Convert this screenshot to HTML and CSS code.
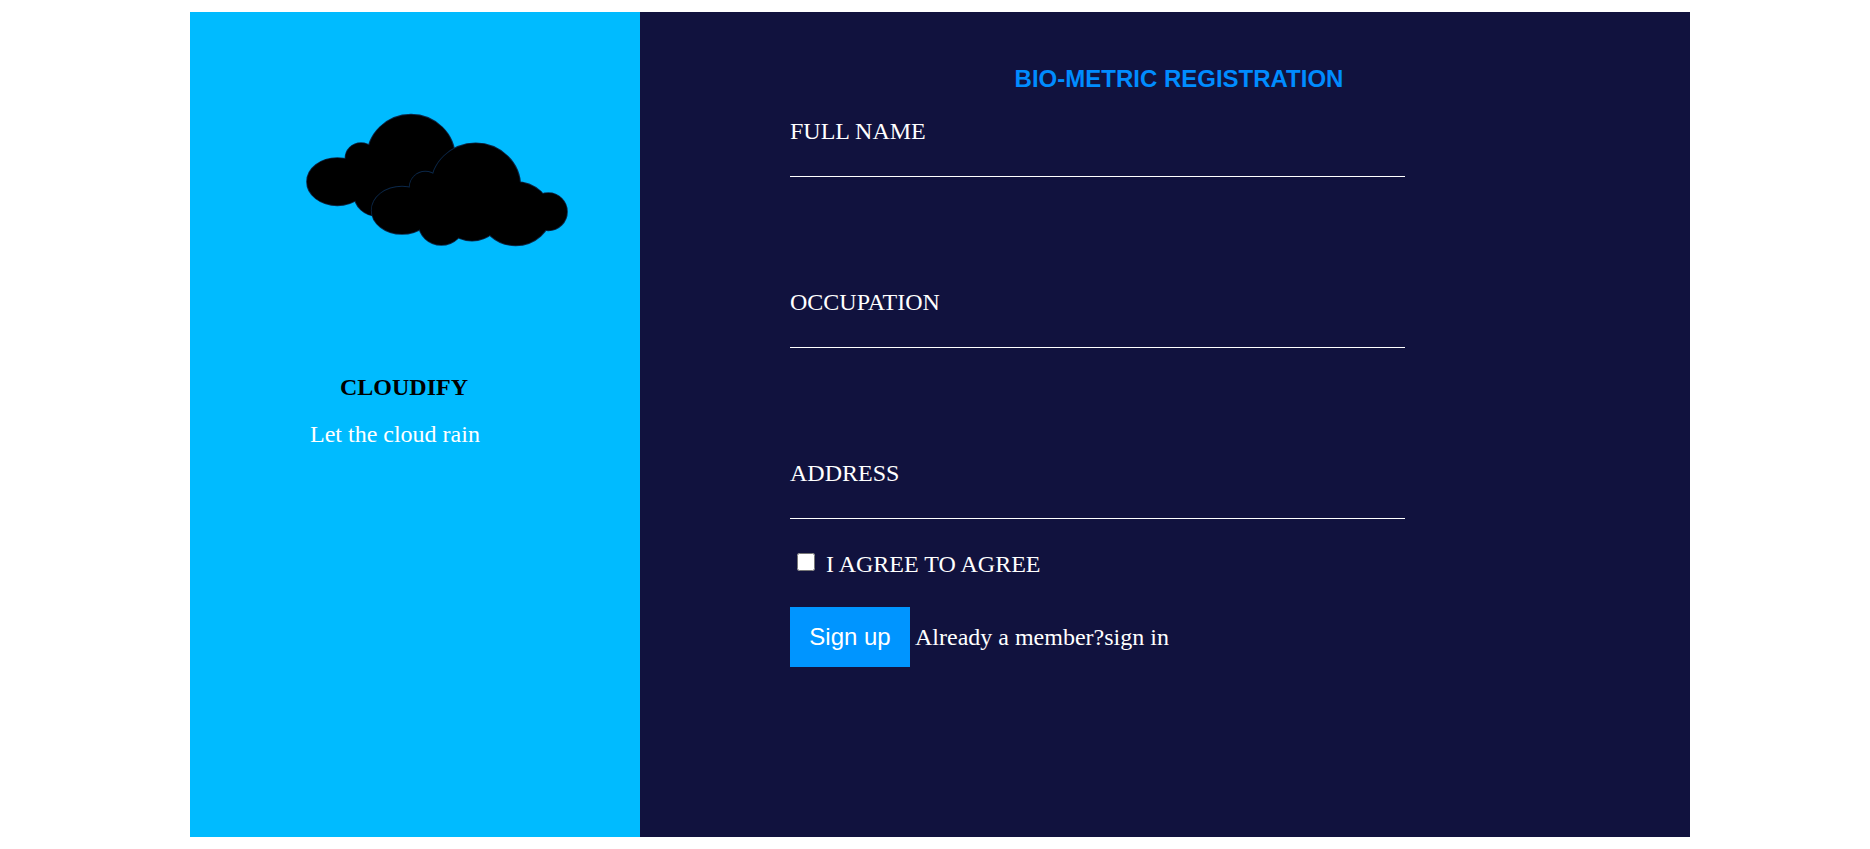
FILE: index.html
```html
<!DOCTYPE html>
<html lang="en">
<head>
<meta charset="utf-8">
<title>Cloudify</title>
<link rel="stylesheet" href="styles.css">
</head>
<body>
<main class="card">
  <aside class="brand">
    <svg class="logo" viewBox="0 0 900 495" aria-hidden="true">
      <defs>
        <g id="back">
          <ellipse cx="363" cy="186" rx="132" ry="130"/>
          <circle cx="213" cy="188" r="47"/>
          <ellipse cx="142" cy="257" rx="91" ry="71"/>
          <ellipse cx="262" cy="296" rx="69" ry="64"/>
          <circle cx="231" cy="234" r="28"/>
        </g>
        <g id="front">
          <ellipse cx="557" cy="272" rx="134" ry="130"/>
          <circle cx="406" cy="274" r="47"/>
          <ellipse cx="336" cy="343" rx="91" ry="71"/>
          <ellipse cx="454" cy="382" rx="68" ry="65"/>
          <ellipse cx="546" cy="350" rx="90" ry="84"/>
          <ellipse cx="677" cy="353" rx="105" ry="95"/>
          <circle cx="775" cy="347" r="56"/>
          <circle cx="426" cy="320" r="30"/>
        </g>
      </defs>
      <use href="#back" class="outline"/>
      <use href="#back"/>
      <use href="#front" class="outline"/>
      <use href="#front"/>
    </svg>
    <h1 class="name">CLOUDIFY</h1>
    <p class="tagline">Let the cloud rain</p>
  </aside>
  <form class="form">
    <h2 class="title">BIO-METRIC REGISTRATION</h2>
    <div class="fields">
      <div class="field">
        <label for="fullname">FULL NAME</label>
        <input class="line" type="text" id="fullname">
      </div>
      <div class="field">
        <label for="occupation">OCCUPATION</label>
        <input class="line" type="text" id="occupation">
      </div>
      <div class="field">
        <label for="address">ADDRESS</label>
        <input class="line" type="text" id="address">
      </div>
    </div>
    <div class="agree">
      <input class="tick" type="checkbox" id="agree">
      <label for="agree">I AGREE TO AGREE</label>
    </div>
    <div class="actions">
      <button class="signup" type="button">Sign up</button>
      <a class="signin" href="#">Already a member?sign in</a>
    </div>
  </form>
</main>
</body>
</html>
```
FILE: styles.css
```css
* {
  box-sizing: border-box;
}

body {
  margin: 0;
  padding: 12px 180px 12px 190px;
  background: #fff;
  font: 24px/28px "Liberation Serif", "Times New Roman", serif;
  color: #fff;
}

.card {
  display: grid;
  grid-template-columns: 3fr 7fr;
  min-height: calc(100vh - 24px);
}

.brand {
  padding: 84px 50px 40px 100px;
  background: #00bbff;
}

.logo {
  display: block;
  width: 100%;
}

.name {
  margin: 112px 0 0 50px;
  font-size: 24px;
  line-height: 28px;
  color: #000;
}

.tagline {
  margin: 19px 0 0 20px;
}

.form {
  padding: 53px 150px 60px;
  background: #11123e;
}

.title {
  margin: 0 0 24px;
  padding-left: 28px;
  font: bold 24px/28px "Liberation Sans", Arial, sans-serif;
  text-align: center;
  color: #008cff;
}

.fields {
  display: grid;
  gap: 111px;
  width: 82%;
}

.field {
  display: grid;
}

.line {
  width: 100%;
  height: 32px;
  padding: 0;
  border: 0;
  border-bottom: 1px solid #fff;
  background: transparent;
  font: inherit;
  color: #fff;
}

.agree {
  display: flex;
  align-items: center;
  gap: 11px;
  margin-top: 31px;
}

.tick {
  width: 18px;
  height: 18px;
  margin: 0 0 4px 7px;
}

.actions {
  display: flex;
  align-items: center;
  gap: 5px;
  margin-top: 29px;
}

.signup {
  width: 120px;
  height: 60px;
  padding: 0;
  border: 0;
  background: #0095ff;
  font: 24px/28px "Liberation Sans", Arial, sans-serif;
  color: #fff;
}

.signin {
  color: #fff;
  text-decoration: none;
}

.outline {
  stroke: #0b2748;
  stroke-width: 5px;
}
```
